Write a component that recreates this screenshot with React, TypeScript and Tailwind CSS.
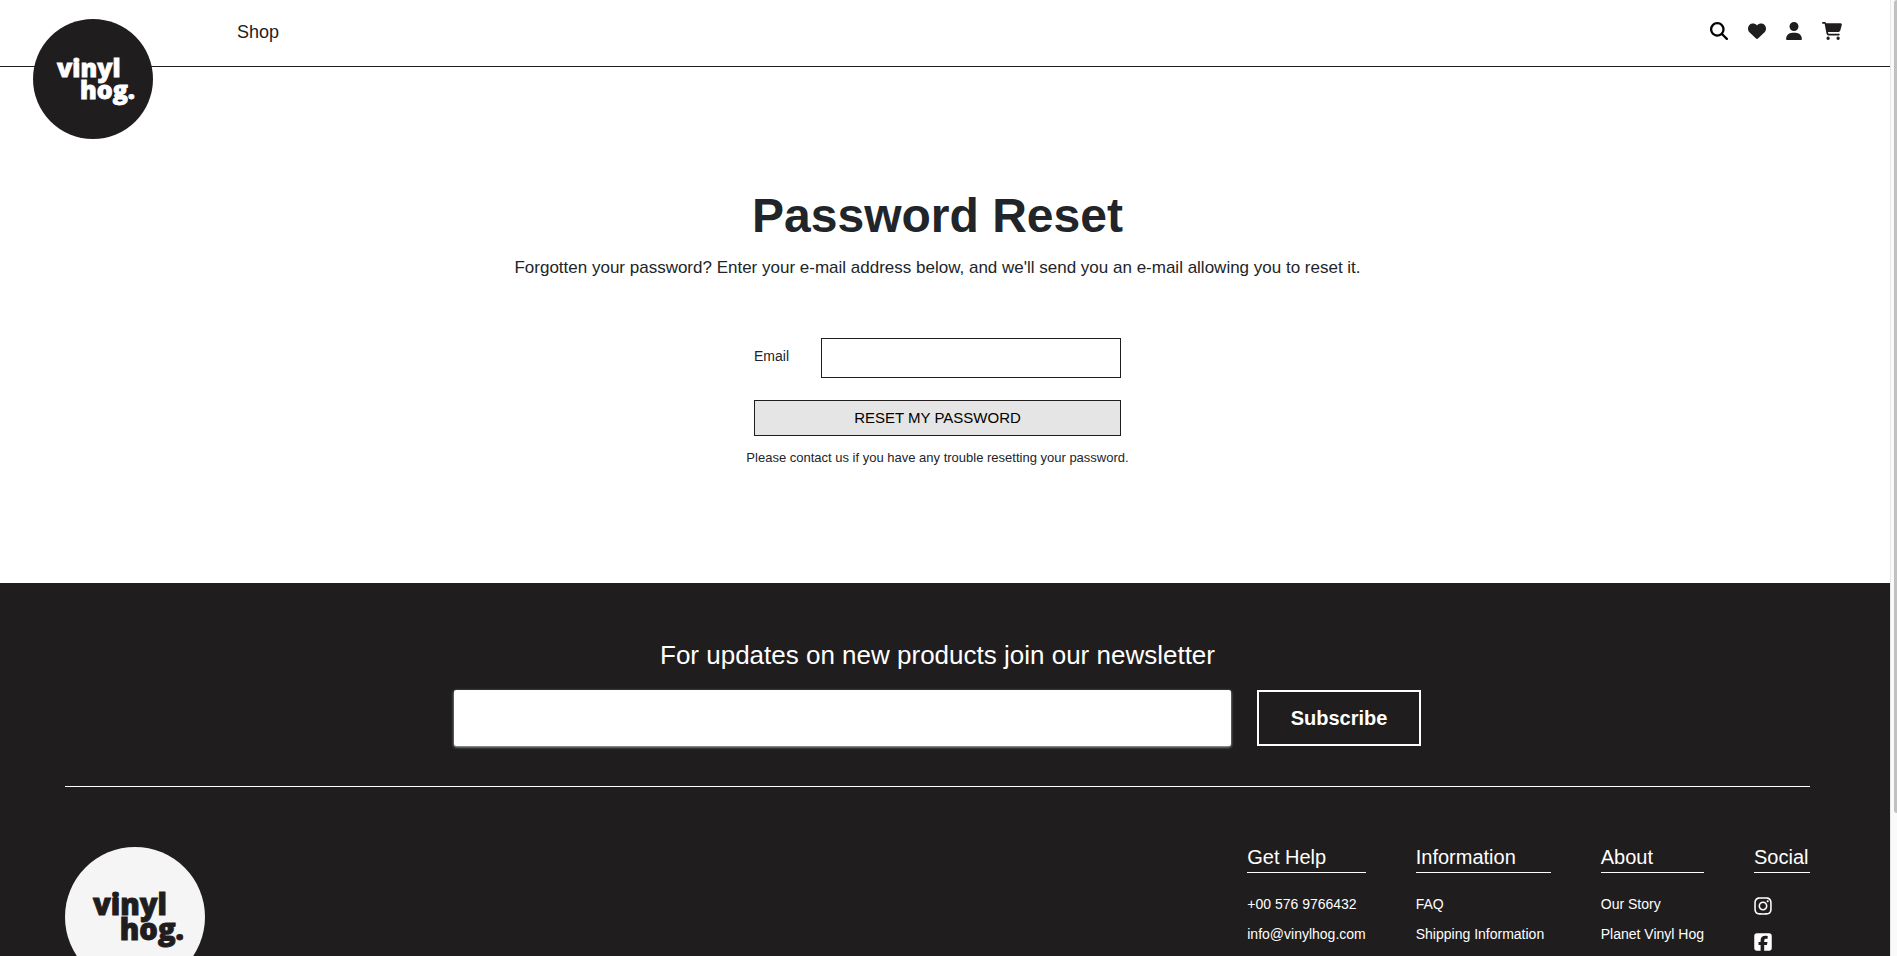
import React from 'react';
import {
  FaCartShopping,
  FaHeart,
  FaInstagram,
  FaMagnifyingGlass,
  FaSquareFacebook,
  FaUser,
} from 'react-icons/fa6';

function Logo({ className, disc, ink }: { className: string; disc: string; ink: string }) {
  return (
    <svg viewBox="0 0 120 120" className={className} role="img" aria-label="vinyl hog.">
      <circle cx="60" cy="60" r="60" fill={disc} />
      <g
        fill={ink}
        stroke={ink}
        strokeWidth="0.8"
        fontFamily="'Open Sans', sans-serif"
        fontWeight="800"
        fontSize="25"
      >
        <text x="24" y="58">vinyl</text>
        <text x="47" y="80">hog.</text>
      </g>
    </svg>
  );
}

function Header() {
  return (
    <header className="flex h-[67px] items-start border-b border-[#1f1d1e] pl-[33px] pr-12 text-[#1f1d1e]">
      <a href="#home" className="relative mt-[19px] block shrink-0">
        <Logo className="size-[120px]" disc="#1f1d1e" ink="#ffffff" />
      </a>
      <nav className="ml-[84px] mt-5">
        <a href="#shop" className="block text-lg leading-6">Shop</a>
      </nav>
      <div className="ml-auto mt-[22px] flex gap-5">
        <button type="button" aria-label="Search" className="text-black">
          <FaMagnifyingGlass className="size-[18px]" />
        </button>
        <a href="#wishlist" aria-label="Wishlist">
          <FaHeart className="size-[18px]" />
        </a>
        <a href="#account" aria-label="Account">
          <FaUser className="h-[18px] w-4" />
        </a>
        <a href="#cart" aria-label="Cart">
          <FaCartShopping className="h-[18px] w-5" />
        </a>
      </div>
    </header>
  );
}

function ResetForm() {
  return (
    <main className="flex flex-col items-center pb-[115px] pr-[15px] pt-[120px] text-[#212529]">
      <h1 className="text-5xl leading-[58px] font-bold">Password Reset</h1>
      <p className="mt-[11px] text-[17px] leading-6">
        Forgotten your password? Enter your e-mail address below, and we'll send you an e-mail allowing you to reset it.
      </p>
      <form className="mt-[58px] flex w-[367px] flex-col" onSubmit={(e) => e.preventDefault()}>
        <div className="flex justify-between">
          <label htmlFor="email" className="pt-2 text-sm leading-5">Email</label>
          <input
            id="email"
            type="email"
            className="h-10 w-[300px] border border-[#1f1d1e] bg-white px-3 outline-none"
          />
        </div>
        <button
          type="submit"
          className="mt-[22px] h-9 border border-[#1f1d1e] bg-[#e5e5e5] text-[15px] leading-5 text-black"
        >
          RESET MY PASSWORD
        </button>
      </form>
      <p className="mt-3 text-[13px] leading-5">
        Please contact us if you have any trouble resetting your password.
      </p>
    </main>
  );
}

function FooterColumn({ title, className, children }: { title: string; className?: string; children: React.ReactNode }) {
  return (
    <section className={className}>
      <h3 className="border-b border-white pb-1 text-xl leading-[21px]">{title}</h3>
      <ul className="mt-[21px] flex flex-col text-sm">{children}</ul>
    </section>
  );
}

function FooterLink({ label }: { label: string }) {
  return (
    <li className="h-[30px] leading-5">
      <a href="#footer">{label}</a>
    </li>
  );
}

function Footer() {
  return (
    <footer id="footer" className="grow bg-[#1f1d1e] pl-[65px] pr-20 pt-14 text-white">
      <form className="flex flex-col items-center" onSubmit={(e) => e.preventDefault()}>
        <label htmlFor="newsletter" className="text-[26px] leading-8">
          For updates on new products join our newsletter
        </label>
        <div className="mt-[19px] flex gap-[26px]">
          <input
            id="newsletter"
            type="email"
            className="h-14 w-[777px] rounded-xs bg-white px-4 text-black shadow-[0_1px_3px_#b9c5c8] outline-none"
          />
          <button type="submit" className="h-14 w-[164px] border-2 border-white text-xl font-bold">
            Subscribe
          </button>
        </div>
      </form>
      <div className="mt-10 flex justify-between border-t border-white pt-[60px]">
        <a href="#home" className="block">
          <Logo className="size-[140px]" disc="#f5f5f5" ink="#1f1d1e" />
        </a>
        <div className="flex gap-[50px]">
          <FooterColumn title="Get Help">
            <FooterLink label="+00 576 9766432" />
            <FooterLink label="info@vinylhog.com" />
          </FooterColumn>
          <FooterColumn title="Information" className="min-w-[135px]">
            <FooterLink label="FAQ" />
            <FooterLink label="Shipping Information" />
          </FooterColumn>
          <FooterColumn title="About">
            <FooterLink label="Our Story" />
            <FooterLink label="Planet Vinyl Hog" />
          </FooterColumn>
          <FooterColumn title="Social" className="min-w-14">
            <li className="h-9 pt-0.5">
              <a href="#instagram" aria-label="Instagram" className="block w-[18px]">
                <FaInstagram className="h-5 w-[18px]" />
              </a>
            </li>
            <li className="h-9 pt-0.5">
              <a href="#facebook" aria-label="Facebook" className="block w-[18px]">
                <FaSquareFacebook className="h-5 w-[18px]" />
              </a>
            </li>
          </FooterColumn>
        </div>
      </div>
    </footer>
  );
}

export default function App() {
  return (
    <div className="flex h-screen overflow-hidden bg-white font-['Liberation_Sans',Arial,sans-serif]">
      <div className="flex min-w-0 grow flex-col overflow-hidden">
        <Header />
        <ResetForm />
        <Footer />
      </div>
      <div className="w-[7px] shrink-0 border-l border-[#e8e8e8] bg-[#fafafa] pl-[3px]">
        <div className="h-[85%] rounded-l bg-[#c1c1c1]" />
      </div>
    </div>
  );
}
